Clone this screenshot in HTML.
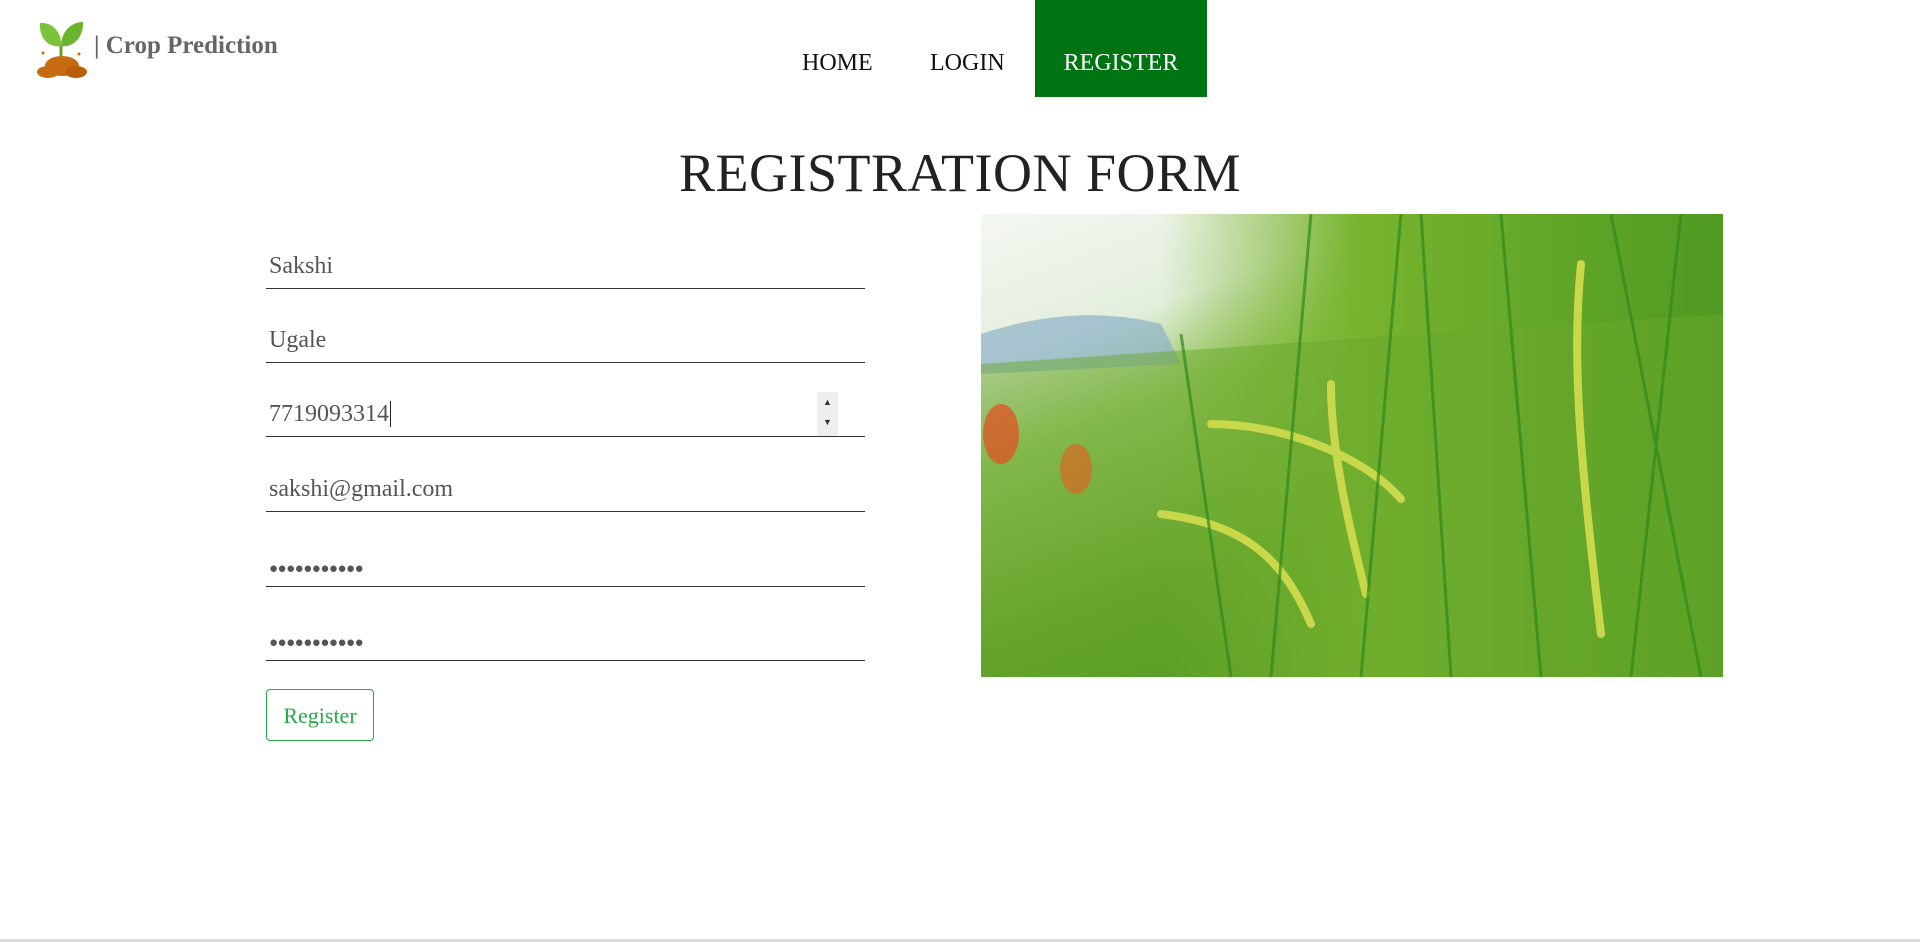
<!DOCTYPE html>
<html><head><meta charset="utf-8"><style>
*{margin:0;padding:0;box-sizing:border-box}
body{width:1920px;height:942px;background:#fff;font-family:"Liberation Serif",serif;position:relative;overflow:hidden}
.abs{position:absolute}
.brand{left:94px;top:32px;font-size:25px;font-weight:bold;color:#666;white-space:nowrap}
.nav{font-size:24px;color:#111;top:50px}
.reg{left:1035px;top:0;width:172px;height:97px;background:#007312;color:#fff;font-size:24px;text-align:center;padding-top:50px}
h1{position:absolute;left:0;width:1920px;text-align:center;top:142px;font-size:54px;font-weight:normal;color:#222;letter-spacing:0.5px}
.f{left:266px;width:599px;border-bottom:1.5px solid #333;height:40px;font-size:24px;color:#555;padding-left:3px;padding-top:4px}
.pw{font-size:15px;padding-top:14px;letter-spacing:-0.5px}
.btn{left:266px;top:689px;width:108px;height:52px;border:1px solid #28a745;border-radius:4px;color:#28a745;font-size:22px;text-align:center;line-height:52px}
</style></head><body>
<svg class="abs" style="left:34px;top:18px" width="56" height="60" viewBox="0 0 56 60">
<path d="M27 44 L27 26" stroke="#6a9e2a" stroke-width="3"/>
<path d="M27 28 C14 30 5 20 6 5 C18 4 28 14 27 28Z" fill="#7cc23a"/>
<path d="M27 28 C40 30 50 18 49 4 C37 4 27 14 27 28Z" fill="#6cb32e"/>
<ellipse cx="28" cy="48" rx="17" ry="10" fill="#c66b0f"/>
<ellipse cx="14" cy="54" rx="11" ry="6" fill="#c66b0f"/>
<ellipse cx="42" cy="54" rx="11" ry="6" fill="#b95f0a"/>
<circle cx="9" cy="35" r="1.5" fill="#c66b0f"/><circle cx="45" cy="36" r="1.5" fill="#c66b0f"/>
</svg>
<div class="abs brand">| Crop Prediction</div>
<div class="abs nav" style="left:802px">HOME</div>
<div class="abs nav" style="left:930px">LOGIN</div>
<div class="abs reg">REGISTER</div>
<h1>REGISTRATION FORM</h1>
<div class="abs f" style="top:249px">Sakshi</div>
<div class="abs f" style="top:323px">Ugale</div>
<div class="abs f" style="top:397px">7719093314<span style="border-left:1px solid #222;margin-left:1px"></span></div>
<div class="abs" style="left:817px;top:392px;width:21px;height:44px;background:#eee;font-size:9px;color:#333;text-align:center;line-height:20px">▲<br>▼</div>
<div class="abs f" style="top:472px">sakshi@gmail.com</div>
<div class="abs f pw" style="top:547px">●●●●●●●●●●●</div>
<div class="abs f pw" style="top:621px">●●●●●●●●●●●</div>
<div class="abs btn">Register</div>
<svg class="abs" style="left:981px;top:214px" width="742" height="463" viewBox="0 0 742 463">
<defs>
<linearGradient id="bg" x1="0" y1="0" x2="0.6" y2="1">
<stop offset="0" stop-color="#f4f8f2"/><stop offset="0.25" stop-color="#e3eedd"/><stop offset="0.4" stop-color="#9cc868"/><stop offset="0.7" stop-color="#5fa12a"/><stop offset="1" stop-color="#3c8a1c"/></linearGradient>
<linearGradient id="rt" x1="0" y1="0" x2="1" y2="0"><stop offset="0" stop-color="#7fb836" stop-opacity="0"/><stop offset="0.35" stop-color="#78b42e"/><stop offset="1" stop-color="#4f9a22"/></linearGradient>
</defs>
<rect width="742" height="463" fill="url(#bg)"/>
<path d="M0 120 C60 100 120 95 180 110 L200 150 L0 160Z" fill="#8cb0c8" opacity="0.7"/>
<rect x="180" y="0" width="562" height="463" fill="url(#rt)"/>
<path d="M0 150 L742 100 L742 463 L0 463Z" fill="#6aa82c" opacity="0.5"/>
<ellipse cx="20" cy="220" rx="18" ry="30" fill="#e84a20" opacity="0.7"/>
<ellipse cx="95" cy="255" rx="16" ry="25" fill="#e85a20" opacity="0.6"/>
<g stroke="#c9d84a" stroke-width="8" stroke-linecap="round" fill="none">
<path d="M230 210 C300 210 380 240 420 285"/>
<path d="M180 300 C260 310 300 340 330 410"/>
<path d="M350 170 C350 240 370 320 385 380"/>
<path d="M600 50 C590 150 600 250 620 420"/>
</g>
<g stroke="#2f8a1e" stroke-width="3" fill="none" opacity="0.7">
<path d="M290 463 L330 0"/><path d="M380 463 L420 0"/><path d="M470 463 L440 0"/><path d="M560 463 L520 0"/><path d="M650 463 L700 0"/><path d="M720 463 L630 0"/><path d="M250 463 L200 120"/>
</g>
</svg>
<div class="abs" style="left:0;top:939px;width:1920px;height:3px;background:#ddd"></div>
</body></html>
